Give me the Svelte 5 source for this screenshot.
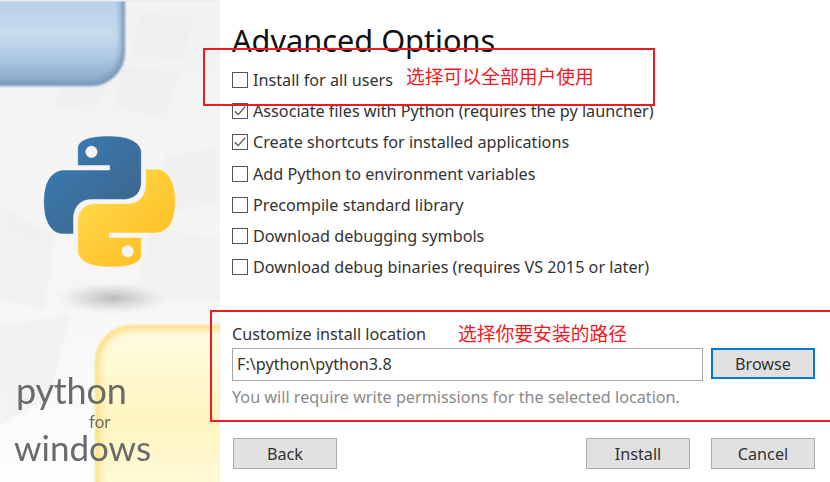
<script>
  const options = [
    { label: 'Install for all users', checked: false },
    { label: 'Associate files with Python (requires the py launcher)', checked: true },
    { label: 'Create shortcuts for installed applications', checked: true },
    { label: 'Add Python to environment variables', checked: false },
    { label: 'Precompile standard library', checked: false },
    { label: 'Download debugging symbols', checked: false },
    { label: 'Download debug binaries (requires VS 2015 or later)', checked: false }
  ];
  const flags = [
    'M140 10 L196 18 L182 62 L130 54 Z', 'M122 64 L180 72 L165 120 L115 108 Z',
    'M60 85 L112 72 L100 105 L55 108 Z', 'M165 155 L220 148 L220 205 L158 212 Z',
    'M0 205 L55 235 L45 310 L0 300 Z', 'M150 225 L220 240 L220 300 L135 300 Z',
    'M0 325 L70 315 L50 400 L0 425 Z', 'M170 410 L220 395 L220 470 L165 470 Z'
  ];
</script>

<div class="window">
  <aside class="side">
    <svg class="art" width="220" height="482" viewBox="0 0 220 482">
      <defs>
        <linearGradient id="bg" x1="0" y1="0" x2="0" y2="1">
          <stop offset="0" stop-color="#f2f2f2" />
          <stop offset="0.6" stop-color="#f6f6f6" />
          <stop offset="1" stop-color="#fdfdfd" />
        </linearGradient>
        <linearGradient id="blueFill" x1="0" y1="0" x2="0" y2="1">
          <stop offset="0" stop-color="#a9c6e2" />
          <stop offset="0.35" stop-color="#b8d0e8" />
          <stop offset="0.62" stop-color="#c9dcee" />
          <stop offset="0.82" stop-color="#a8c5e1" />
          <stop offset="1" stop-color="#88aac9" />
        </linearGradient>
        <linearGradient id="yellowFill" x1="0" y1="0" x2="0" y2="1">
          <stop offset="0" stop-color="#fffbe2" />
          <stop offset="0.45" stop-color="#fef5bf" />
          <stop offset="1" stop-color="#fffbe6" />
        </linearGradient>
        <linearGradient id="snakeBlue" x1="0" y1="0" x2="1" y2="1">
          <stop offset="0" stop-color="#387eb8" />
          <stop offset="1" stop-color="#3f6284" />
        </linearGradient>
        <linearGradient id="snakeYellow" x1="0" y1="0" x2="1" y2="1">
          <stop offset="0" stop-color="#ffe052" />
          <stop offset="1" stop-color="#ffb81c" />
        </linearGradient>
        <radialGradient id="shadow">
          <stop offset="0" stop-color="#bcbcbc" />
          <stop offset="0.35" stop-color="#d6d6d6" />
          <stop offset="0.7" stop-color="#ececec" />
          <stop offset="1" stop-color="#f4f4f4" stop-opacity="0" />
        </radialGradient>
        <pattern id="hatch" width="4" height="4" patternUnits="userSpaceOnUse" patternTransform="rotate(-25)">
          <rect width="4" height="4" fill="#f2f2f2" />
          <rect width="4" height="1.4" fill="#e9e9e9" />
        </pattern>
        <filter id="b1" x="-10%" y="-10%" width="120%" height="120%"><feGaussianBlur stdDeviation="1.2" /></filter>
        <filter id="b2" x="-10%" y="-10%" width="120%" height="120%"><feGaussianBlur stdDeviation="3" /></filter>
      </defs>
      <rect width="220" height="482" fill="url(#bg)" />
      {#each flags as d}
        <path {d} fill="url(#hatch)" opacity="0.6" filter="url(#b1)" />
      {/each}
      <rect x="-50" y="-40" width="175" height="126" rx="34" fill="#7495b5" filter="url(#b1)" />
      <rect x="-50" y="-40" width="171" height="122" rx="31" fill="url(#blueFill)" filter="url(#b2)" />
      <rect x="0" y="0" width="220" height="1.5" fill="#ececec" />
      <rect x="95" y="325" width="180" height="200" rx="37" fill="#fddf85" filter="url(#b1)" />
      <rect x="100" y="330" width="175" height="195" rx="33" fill="url(#yellowFill)" filter="url(#b2)" />
      <ellipse cx="113" cy="298" rx="62" ry="17" fill="url(#shadow)" />
      <g transform="translate(44 136) scale(5.46)">
        <path fill="url(#snakeBlue)" stroke="#fff" stroke-opacity="0.7" stroke-width="0.12" fill-rule="evenodd" d="M14.25.18l.9.2.73.26.59.3.45.32.34.34.25.34.16.33.1.3.04.26.02.2-.01.13V8.5l-.05.63-.13.55-.21.46-.26.38-.3.31-.33.25-.35.19-.35.14-.33.1-.3.07-.26.04-.21.02H8.77l-.69.05-.59.14-.5.22-.41.27-.33.32-.27.35-.2.36-.15.37-.1.35-.07.32-.04.27-.02.21v3.06H3.17l-.21-.03-.28-.07-.32-.12-.35-.18-.36-.26-.36-.36-.35-.46-.32-.59-.28-.73-.21-.88-.14-1.05-.05-1.23.06-1.22.16-1.04.24-.87.32-.71.36-.57.4-.44.42-.33.42-.24.4-.16.36-.1.32-.05.24-.01h.16l.06.01h8.16v-.83H6.18l-.01-2.75-.02-.37.05-.34.11-.31.17-.28.25-.26.31-.23.38-.2.44-.18.51-.15.58-.12.64-.1.71-.06.77-.04.84-.02 1.27.05zM7.95 2.16l-.23.33-.08.41.08.41.23.34.33.22.41.09.41-.09.33-.22.23-.34.08-.41-.08-.41-.23-.33-.33-.22-.41-.09-.41.09z" />
        <path fill="url(#snakeYellow)" stroke="#fff" stroke-opacity="0.7" stroke-width="0.12" fill-rule="evenodd" d="M21.04 6.11l.28.06.32.12.35.18.36.27.36.35.35.47.32.59.28.73.21.88.14 1.04.05 1.23-.06 1.23-.16 1.04-.24.86-.32.71-.36.57-.4.45-.42.33-.42.24-.4.16-.36.09-.32.05-.24.02-.16-.01h-8.22v.82h5.84l.01 2.76.02.36-.05.34-.11.31-.17.29-.25.25-.31.24-.38.2-.44.17-.51.15-.58.13-.64.09-.71.07-.77.04-.84.01-1.27-.04-1.07-.14-.9-.2-.73-.25-.59-.3-.45-.33-.34-.34-.25-.34-.16-.33-.1-.3-.04-.25-.02-.2.01-.13v-5.34l.05-.64.13-.54.21-.46.26-.38.3-.32.33-.24.35-.2.35-.14.33-.1.3-.06.26-.04.21-.02.13-.01h5.84l.69-.05.59-.14.5-.21.41-.28.33-.32.27-.35.2-.36.15-.36.1-.35.07-.32.04-.28.02-.21V6.07h2.09l.14.01zM14.57 20.36l-.23.33-.08.41.08.41.23.33.33.23.41.08.41-.08.33-.23.23-.33.08-.41-.08-.41-.23-.33-.33-.23-.41-.08-.41.08z" />
      </g>
    </svg>
    <div class="brand">
      <span class="b-python">python</span>
      <span class="b-for">for</span>
      <span class="b-windows">windows</span>
    </div>
  </aside>

  <main class="main">
    <h1>Advanced Options</h1>
    <ul class="options">
      {#each options as o}
        <li class="option">
          <span class="box">
            {#if o.checked}
              <svg width="14" height="14" viewBox="0 0 14 14"><path d="M1.8 7.2 L5.2 10.6 L12.2 2.6" fill="none" stroke="#505050" stroke-width="1.3" /></svg>
            {/if}
          </span>
          <span>{o.label}</span>
        </li>
      {/each}
    </ul>

    <section class="location">
      <div class="loc-label">Customize install location</div>
      <div class="loc-row">
        <div class="input">F:\python\python3.8</div>
        <button class="btn focus">Browse</button>
      </div>
      <div class="hint">You will require write permissions for the selected location.</div>
    </section>

    <footer class="actions">
      <button class="btn">Back</button>
      <span class="spacer"></span>
      <button class="btn">Install</button>
      <button class="btn">Cancel</button>
    </footer>
  </main>

  <div class="note note-a"><span class="note-text">选择可以全部用户使用</span></div>
  <div class="note note-b"><span class="note-text">选择你要安装的路径</span></div>
</div>

<style>
  :global(body) { margin: 0; background: #fff; }
  .window {
    position: relative;
    width: 830px;
    height: 482px;
    display: flex;
    overflow: hidden;
    background: #fff;
    font-family: "Noto Sans", "Open Sans", sans-serif;
    font-size: 16.2px;
    color: #333;
  }
  .side { position: relative; width: 220px; flex: none; display: flex; flex-direction: column; justify-content: flex-end; }
  .art { position: absolute; inset: 0; display: block; }
  .brand {
    position: relative;
    display: flex;
    flex-direction: column;
    font-family: Lato, "Noto Sans", sans-serif;
    font-weight: 400;
    color: #6a6a6a;
    padding: 0 0 17px 14px;
    line-height: 1;
    filter: blur(0.5px);
  }
  .b-python { font-size: 36px; margin: 0 0 5px 2px; letter-spacing: -0.2px; }
  .b-for { font-size: 17px; margin-left: 75px; margin-bottom: 0; }
  .b-windows { font-size: 35px; }
  .main { flex: 1; min-width: 0; display: flex; flex-direction: column; padding: 0 15px 13px 12px; }
  h1 { margin: 19px 0 0; font-size: 30.7px; font-weight: 400; line-height: 42px; color: #111; }
  .options { list-style: none; margin: 3px 0 0; padding: 0; display: flex; flex-direction: column; }
  .option { display: flex; align-items: center; gap: 5px; height: 31.3px; white-space: nowrap; }
  .box {
    width: 14px; height: 14px; border: 1px solid #555; background: #fff; flex: none;
    display: flex;
  }
  .location { margin-top: 41px; display: flex; flex-direction: column; }
  .loc-label { line-height: 20px; margin-bottom: 4px; }
  .loc-row { display: flex; gap: 8px; align-items: flex-start; }
  .input {
    flex: 1; height: 31px; border: 1px solid #a5a5a5; background: #fff; padding-left: 4px;
    line-height: 31px; box-sizing: content-box; color: #333;
  }
  .hint { color: #8a8a8a; margin-top: 4px; line-height: 24px; }
  .btn {
    width: 104px; height: 31px; padding: 0; box-sizing: border-box;
    background: #e1e1e1; border: 1px solid #adadad; border-radius: 0;
    font: inherit; color: #333;
  }
  .btn.focus { border: 2px solid #0078d7; }
  .actions { margin-top: auto; display: flex; gap: 21px; padding-left: 1px; }
  .spacer { flex: 1; }
  .note { position: absolute; border: 2px solid #ed1c24; box-sizing: border-box; }
  .note-a { left: 203px; top: 48px; width: 452px; height: 58px; }
  .note-b { left: 210px; top: 310px; width: 640px; height: 112px; }
  .note-text {
    position: absolute; color: #ed1c24;
    font: 400 18.8px "Noto Sans CJK SC", sans-serif; line-height: 24px; white-space: nowrap;
  }
  .note-a .note-text { left: 201px; top: 14px; }
  .note-b .note-text { left: 246px; top: 9px; }
</style>
